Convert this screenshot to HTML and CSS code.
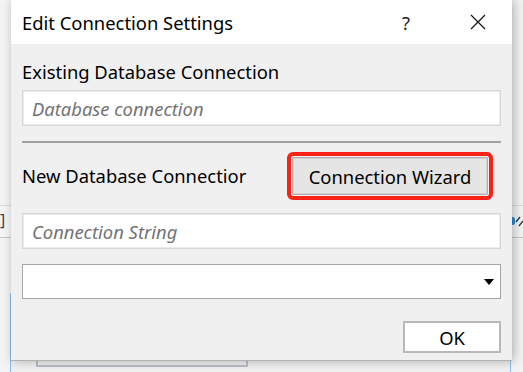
FILE: index.html
```html
<!DOCTYPE html>
<html lang="en">
<head>
    <meta charset="UTF-8">
    <meta name="viewport" content="width=device-width, initial-scale=1.0">
    <title>Edit Connection Settings</title>
    <link rel="stylesheet" href="styles.css">
</head>
<body>

    <!-- the window behind the dialog -->
    <div class="backdrop">
        <div class="tool-strip">
            <span class="bracket">]</span>
            <span class="strip-dot"></span>
            <svg class="strip-mark" width="9" height="12" viewBox="0 0 9 12">
                <path d="M1 7 L5 2 M4 11 L8 6" stroke="#333" stroke-width="1.3" fill="none"/>
            </svg>
        </div>
        <div class="back-window">
            <div class="back-field"></div>
        </div>
    </div>

    <div class="dialog">
        <div class="titlebar">
            <span class="title">Edit Connection Settings</span>
            <span class="help">?</span>
            <span class="close">
                <svg width="16" height="16" viewBox="0 0 16 16">
                    <path d="M1 1 L15 15 M15 1 L1 15" stroke="#111" stroke-width="1.2" fill="none"/>
                </svg>
            </span>
        </div>

        <div class="content">
            <label class="field-label first">Existing Database Connection</label>
            <input class="text-input" type="text" placeholder="Database connection">

            <div class="divider"></div>

            <div class="wizard-row">
                <span class="field-label">New Database Connectior</span>
                <button class="wizard-btn">Connection Wizard</button>
            </div>

            <input class="text-input conn-string" type="text" placeholder="Connection String">

            <div class="select-box">
                <span class="caret"></span>
            </div>

            <div class="actions">
                <button class="ok-btn">OK</button>
            </div>
        </div>
    </div>

</body>
</html>
```

FILE: styles.css
```css
body {
    margin: 0;
    width: 523px;
    height: 372px;
    overflow: hidden;
    position: relative;
    background-color: #f3f3f3;
    font-family: "Noto Sans", "Open Sans", sans-serif;
    color: #000;
}

/* background window */
.backdrop {
    position: absolute;
    left: 0;
    top: 0;
    width: 523px;
    height: 372px;
}
.tool-strip {
    position: absolute;
    left: 0;
    top: 205px;
    width: 523px;
    height: 31px;
    border-top: 1px solid #dcdcdc;
    border-bottom: 1px solid #c8c8c8;
    background: #f4f4f4;
}
.bracket {
    position: absolute;
    left: 0;
    top: 3px;
    font-size: 16px;
    color: #444;
}
.strip-dot {
    position: absolute;
    left: 510px;
    top: 11px;
    width: 5px;
    height: 8px;
    border-radius: 3px;
    background: #2a8ad8;
}
.strip-mark {
    position: absolute;
    left: 515px;
    top: 9px;
}
.back-window {
    position: absolute;
    left: 10px;
    top: 293px;
    width: 499px;
    height: 79px;
    border-left: 1px solid #8cbce6;
    border-right: 1px solid #8cbce6;
    background: #f0f0f0;
}
.back-field {
    position: absolute;
    left: 25px;
    top: 66px;
    width: 208px;
    height: 6px;
    border: 2px solid #b9bdc7;
    border-top: none;
}

/* dialog */
.dialog {
    position: absolute;
    left: 11px;
    top: 0;
    width: 501px;
    height: 360px;
    background: #f0f0f0;
    border-bottom: 1px solid #b2b2b2;
    box-shadow: 2px 0 10px rgba(0, 0, 0, 0.28);
    display: flex;
    flex-direction: column;
}
.titlebar {
    height: 44px;
    background: white;
    display: flex;
    align-items: center;
    padding-left: 11px;
    font-size: 18.4px;
}
.title {
    flex: 1;
}
.help {
    width: 10px;
    margin-right: 58px;
    color: #222;
}
.close {
    display: flex;
    margin-right: 26px;
}

.content {
    display: flex;
    flex-direction: column;
    padding: 0 11px;
    font-size: 18.4px;
}
.field-label {
    line-height: 24px;
}
.field-label.first {
    margin-top: 16px;
}
.text-input {
    margin-top: 6px;
    height: 36px;
    box-sizing: border-box;
    padding: 0 9px;
    border: 1px solid #d6d6d6;
    box-shadow: inset 0 0 0 1px #ececec;
    background: white;
    font-family: inherit;
    font-size: 18.4px;
    outline: none;
}
.text-input::placeholder {
    color: #737373;
    font-style: italic;
}
.divider {
    margin-top: 15px;
    height: 2px;
    background: #a0a0a0;
}
.wizard-row {
    margin-top: 14px;
    display: flex;
    align-items: center;
    justify-content: space-between;
}
.wizard-btn {
    width: 196px;
    height: 38px;
    margin-right: 13px;
    border: 1px solid #adadad;
    box-shadow: inset 0 0 0 1px #d2d2d2;
    background: #e5e5e5;
    font-family: inherit;
    font-size: 18.4px;
    color: #000;
    outline: 4px solid #fa2117;
    outline-offset: 1px;
    border-radius: 1px;
}
.conn-string {
    margin-top: 18px;
}
.select-box {
    margin-top: 15px;
    height: 35px;
    box-sizing: border-box;
    border: 1px solid #a6a6a6;
    background: white;
    position: relative;
}
.caret {
    position: absolute;
    right: 6px;
    top: 14px;
    border-left: 5px solid transparent;
    border-right: 5px solid transparent;
    border-top: 6px solid #000;
}
.actions {
    margin-top: 22px;
    display: flex;
    justify-content: flex-end;
}
.ok-btn {
    width: 98px;
    height: 32px;
    border: 2px solid #b8b8b8;
    background: white;
    font-family: inherit;
    font-size: 18.4px;
    color: #000;
}
```
